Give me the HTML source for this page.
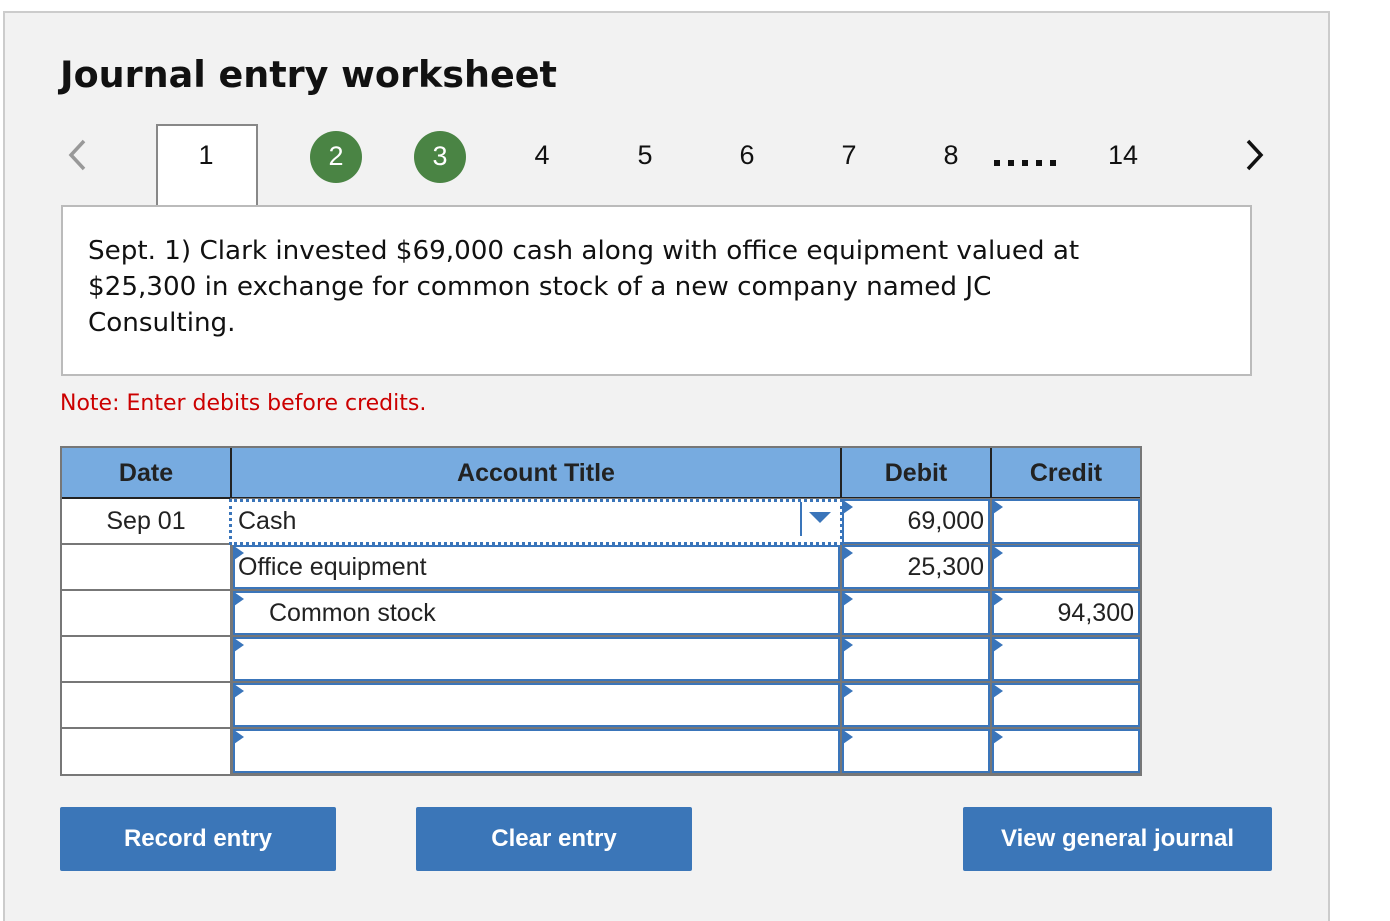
<!DOCTYPE html>
<html><head><style>
*{margin:0;padding:0;box-sizing:border-box}
body{width:1390px;height:916px;background:#fff;font-family:"Liberation Sans",Arial,sans-serif;position:relative;overflow:hidden}
.a{position:absolute}
.panel{left:3px;top:11px;width:1327px;height:910px;background:#f2f2f2;border:2px solid #ccc;border-bottom:none}
h1{position:absolute;left:60px;top:53px;font-size:36.5px;font-weight:bold;font-family:"DejaVu Sans",sans-serif;color:#111}
.num{position:absolute;top:140px;font-size:27px;color:#111;width:40px;text-align:center}
.circ{position:absolute;top:131px;width:52px;height:52px;border-radius:50%;background:#4a8444;color:#fff;font-size:27px;text-align:center;line-height:50px}
.tab{left:156px;top:124px;width:102px;height:84px;background:#fff;border:2px solid #888;border-bottom:none}
.box{left:61px;top:205px;width:1191px;height:171px;background:#fff;border:2px solid #bbb}
.q{left:88px;top:233px;line-height:36px;color:#111;font-family:"DejaVu Sans",sans-serif;font-size:26.2px}
.note{left:60px;top:391px;color:#c00;font-family:"DejaVu Sans",sans-serif;font-size:22px}
.hd{position:absolute;top:448px;height:50px;background:#77abe0;font-weight:bold;font-size:25px;color:#222;text-align:center;line-height:50px;border-right:2px solid #222}
.in{position:absolute;border:2px solid #3a75ba;background:#fff;font-size:25px;color:#222;line-height:40px}
.in:before{content:"";position:absolute;left:-1px;top:-1px;border-left:10px solid #3a75ba;border-top:7px solid transparent;border-bottom:7px solid transparent}
.r{text-align:right;padding-right:4px}
.btn{position:absolute;top:807px;height:64px;background:#3b76b8;color:#fff;font-weight:bold;font-size:24px;text-align:center;line-height:64px;border-radius:2px}
.dot{position:absolute;top:160px;width:6px;height:6px;background:#111}
</style></head><body>
<div class="a panel"></div>
<h1>Journal entry worksheet</h1>
<svg class="a" style="left:64px;top:138px" width="26" height="34"><path d="M20 3 L7 17 L20 31" stroke="#999" stroke-width="3.5" fill="none"/></svg>
<svg class="a" style="left:1242px;top:138px" width="26" height="34"><path d="M6 3 L19 17 L6 31" stroke="#111" stroke-width="3.5" fill="none"/></svg>
<div class="a tab"></div>
<div class="num" style="left:186px">1</div>
<div class="circ" style="left:310px">2</div>
<div class="circ" style="left:414px">3</div>
<div class="num" style="left:522px">4</div>
<div class="num" style="left:625px">5</div>
<div class="num" style="left:727px">6</div>
<div class="num" style="left:829px">7</div>
<div class="num" style="left:931px">8</div>
<div class="dot" style="left:994px"></div><div class="dot" style="left:1008px"></div><div class="dot" style="left:1022px"></div><div class="dot" style="left:1036px"></div><div class="dot" style="left:1050px"></div>
<div class="num" style="left:1103px">14</div>
<div class="a box"></div>
<div class="a q">Sept. 1) Clark invested $69,000 cash along with office equipment valued at<br>$25,300 in exchange for common stock of a new company named JC<br>Consulting.</div>
<div class="a note">Note: Enter debits before credits.</div>
<div class="a" style="left:60px;top:446px;width:1082px;height:330px;border:2px solid #777;background:#fff"></div>
<div class="hd" style="left:62px;width:170px">Date</div>
<div class="hd" style="left:232px;width:610px">Account Title</div>
<div class="hd" style="left:842px;width:150px">Debit</div>
<div class="hd" style="left:992px;width:148px;border-right:none">Credit</div>
<div class="a" style="left:62px;top:497px;width:1078px;height:2px;background:#222"></div>
<div class="a" style="left:230px;top:498px;width:2px;height:276px;background:#777"></div>
<div class="a" style="left:62px;top:543px;width:170px;height:2px;background:#777"></div>
<div class="a" style="left:62px;top:589px;width:170px;height:2px;background:#777"></div>
<div class="a" style="left:62px;top:635px;width:170px;height:2px;background:#777"></div>
<div class="a" style="left:62px;top:681px;width:170px;height:2px;background:#777"></div>
<div class="a" style="left:62px;top:727px;width:170px;height:2px;background:#777"></div>
<div class="a" style="left:62px;top:507px;width:168px;text-align:center;font-size:25px;color:#222">Sep 01</div>
<div class="a" style="left:232px;top:498px;width:908px;height:276px;background:#777"></div>
<div class="a" style="left:229px;top:499px;width:614px;height:46px;background:#fff;border:3px dotted #3a75ba"></div>
<div class="a" style="left:238px;top:507px;font-size:25px;color:#222">Cash</div>
<div class="a" style="left:800px;top:502px;width:2px;height:34px;background:#3a75ba"></div>
<svg class="a" style="left:809px;top:512px" width="22" height="12"><path d="M0 0 L22 0 L11 11Z" fill="#3a75ba"/></svg>
<div class="in r" style="left:842px;top:499px;width:148px;height:45px">69,000</div>
<div class="in" style="left:992px;top:499px;width:148px;height:45px"></div>
<div class="in" style="left:233px;top:545px;width:607px;height:44px;padding-left:3px">Office equipment</div>
<div class="in r" style="left:842px;top:545px;width:148px;height:44px">25,300</div>
<div class="in" style="left:992px;top:545px;width:148px;height:44px"></div>
<div class="in" style="left:233px;top:591px;width:607px;height:44px;padding-left:34px">Common stock</div>
<div class="in" style="left:842px;top:591px;width:148px;height:44px"></div>
<div class="in r" style="left:992px;top:591px;width:148px;height:44px">94,300</div>
<div class="in" style="left:233px;top:637px;width:607px;height:44px"></div>
<div class="in" style="left:842px;top:637px;width:148px;height:44px"></div>
<div class="in" style="left:992px;top:637px;width:148px;height:44px"></div>
<div class="in" style="left:233px;top:683px;width:607px;height:44px"></div>
<div class="in" style="left:842px;top:683px;width:148px;height:44px"></div>
<div class="in" style="left:992px;top:683px;width:148px;height:44px"></div>
<div class="in" style="left:233px;top:729px;width:607px;height:44px"></div>
<div class="in" style="left:842px;top:729px;width:148px;height:44px"></div>
<div class="in" style="left:992px;top:729px;width:148px;height:44px"></div>
<div class="btn" style="left:60px;width:276px">Record entry</div>
<div class="btn" style="left:416px;width:276px">Clear entry</div>
<div class="btn" style="left:963px;width:309px">View general journal</div>
</body></html>
